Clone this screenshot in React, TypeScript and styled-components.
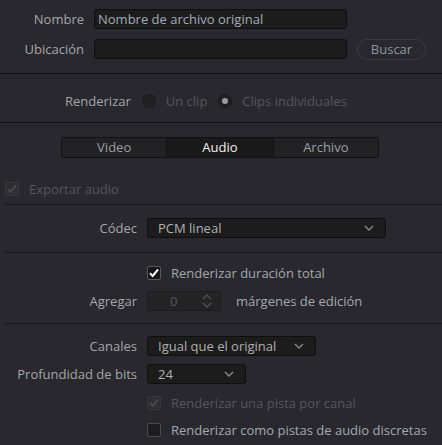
import React from "react";
import styled, { createGlobalStyle } from "styled-components";

const Global = createGlobalStyle`
  html, body { margin: 0; padding: 0; background: #28282e; }
  body { font-family: "Open Sans", "DejaVu Sans", sans-serif; font-size: 13px; color: #a6a6a8; }
  * { box-sizing: border-box; }
`;

const Page = styled.div`
  width: 442px;
  height: 445px;
  background: #28282e;
  overflow: hidden;
`;

const Divider = styled.div<{ $inset?: number }>`
  height: 1px;
  background: #141416;
  margin-left: ${(p) => p.$inset ?? 0}px;
`;

const Section = styled.div<{ $top: number; $bottom: number; $gap?: number }>`
  display: flex;
  flex-direction: column;
  gap: ${(p) => p.$gap ?? 0}px;
  padding-top: ${(p) => p.$top}px;
  padding-bottom: ${(p) => p.$bottom}px;
`;

const FormGrid = styled.div<{ $label: number; $rowGap: number }>`
  display: grid;
  grid-template-columns: ${(p) => p.$label}px 1fr;
  column-gap: 10px;
  row-gap: ${(p) => p.$rowGap}px;
  align-items: center;
`;

const Label = styled.div`
  text-align: right;
  color: #a6a6a8;
  white-space: nowrap;
  line-height: 20px;
`;

const FieldRow = styled.div`
  display: flex;
  align-items: center;
  gap: 10px;
  height: 20px;
`;

const TextInput = styled.div<{ $w: number }>`
  width: ${(p) => p.$w}px;
  height: 20px;
  background: #1c1c1d;
  border: 1px solid #0f0f10;
  border-radius: 3px;
  color: #a3abb4;
  padding-left: 3px;
  line-height: 18px;
  white-space: nowrap;
`;

const PillButton = styled.div`
  width: 69px;
  height: 21px;
  border: 1px solid #3c3c42;
  border-radius: 11px;
  color: #8d959e;
  text-align: center;
  line-height: 19px;
`;

const RenderRow = styled.div`
  display: flex;
  align-items: center;
  height: 20px;
  padding-left: 65px;
`;

const RadioCircle = styled.span<{ $on?: boolean }>`
  width: 14px;
  height: 14px;
  border-radius: 50%;
  background: #202023;
  border: 1px solid #1a1a1c;
  display: inline-flex;
  align-items: center;
  justify-content: center;
  margin: 0 10px 0 11px;
  &::after {
    content: "";
    display: ${(p) => (p.$on ? "block" : "none")};
    width: 6px;
    height: 6px;
    border-radius: 50%;
    background: #9a9a9e;
  }
`;

const DimText = styled.span`
  color: #56565d;
  white-space: nowrap;
`;

const Tabs = styled.div`
  display: flex;
  margin-left: 61px;
  width: 318px;
  height: 21px;
  border: 1px solid #111113;
  border-radius: 3px;
  overflow: hidden;
  background: #222225;
`;

const Tab = styled.div<{ $active?: boolean; $w: number }>`
  width: ${(p) => p.$w}px;
  text-align: center;
  line-height: 19px;
  color: ${(p) => (p.$active ? "#f2f2f2" : "#9c9ea2")};
  background: ${(p) => (p.$active ? "#19191a" : "transparent")};
  & + & {
    border-left: 1px solid #111113;
  }
`;

const CheckRow = styled.div<{ $indent: number; $mt?: number }>`
  display: flex;
  align-items: center;
  gap: 10px;
  height: 16px;
  padding-left: ${(p) => p.$indent}px;
  margin-top: ${(p) => p.$mt ?? 0}px;
`;

const Box = styled.span<{ $variant: "on" | "off" | "disabled" }>`
  width: 14px;
  height: 14px;
  border-radius: 2px;
  display: inline-flex;
  align-items: center;
  justify-content: center;
  flex: none;
  background: ${(p) => (p.$variant === "on" ? "#161617" : p.$variant === "off" ? "#1e1e20" : "#2d2d32")};
  border: 1px solid ${(p) => (p.$variant === "on" ? "#58585c" : p.$variant === "off" ? "#4a4a4f" : "#38383d")};
`;

const CheckText = styled.span<{ $dim?: boolean; $ml?: number }>`
  color: ${(p) => (p.$dim ? "#56565d" : "#a4a9af")};
  white-space: nowrap;
  margin-left: ${(p) => p.$ml ?? 0}px;
`;

const Select = styled.div<{ $w: number }>`
  width: ${(p) => p.$w}px;
  height: 20px;
  background: #1c1c1d;
  border: 1px solid #0f0f10;
  border-radius: 3px;
  display: flex;
  align-items: center;
  justify-content: space-between;
  padding: 0 11px 0 10px;
  color: #b0b0b2;
  white-space: nowrap;
`;

const Spin = styled.div`
  width: 74px;
  height: 20px;
  background: #242427;
  border: 1px solid #1c1c1e;
  border-radius: 3px;
  display: flex;
  align-items: center;
  justify-content: space-between;
  padding: 0 8px 0 22px;
  color: #55585c;
`;

const SpinArrows = styled.span`
  display: flex;
  flex-direction: column;
  gap: 2px;
`;

const Chevron = ({ up, color = "#8a8a8e" }: { up?: boolean; color?: string }) => (
  <svg width="10" height="6" viewBox="0 0 10 6">
    <path
      d={up ? "M1 5 L5 1 L9 5" : "M1 1 L5 5 L9 1"}
      fill="none"
      stroke={color}
      strokeWidth="1.4"
    />
  </svg>
);

const Tick = ({ color }: { color: string }) => (
  <svg width="12" height="12" viewBox="0 0 12 12">
    <path d="M2 6.3 L4.7 9 L10 2.5" fill="none" stroke={color} strokeWidth="2" />
  </svg>
);

export default function App() {
  return (
    <Page>
      <Global />
      <Section $top={9} $bottom={14}>
        <FormGrid $label={84} $rowGap={10}>
          <Label>Nombre</Label>
          <FieldRow>
            <TextInput $w={253}>Nombre de archivo original</TextInput>
          </FieldRow>
          <Label>Ubicación</Label>
          <FieldRow>
            <TextInput $w={253} />
            <PillButton>Buscar</PillButton>
          </FieldRow>
        </FormGrid>
      </Section>
      <Divider />
      <Section $top={17} $bottom={11}>
        <RenderRow>
          <Label>Renderizar</Label>
          <RadioCircle />
          <DimText>Un clip</DimText>
          <RadioCircle $on />
          <DimText>Clips individuales</DimText>
        </RenderRow>
      </Section>
      <Divider />
      <Section $top={14} $bottom={7} $gap={23}>
        <Tabs>
          <Tab $w={105}>Video</Tab>
          <Tab $w={107} $active>Audio</Tab>
          <Tab $w={106}>Archivo</Tab>
        </Tabs>
        <CheckRow $indent={5}>
          <Box $variant="disabled">
            <Tick color="#48484e" />
          </Box>
          <CheckText $dim>Exportar audio</CheckText>
        </CheckRow>
      </Section>
      <Divider $inset={5} />
      <Section $top={13} $bottom={14}>
        <FormGrid $label={137} $rowGap={0}>
          <Label>Códec</Label>
          <Select $w={239}>
            <span>PCM lineal</span>
            <Chevron />
          </Select>
        </FormGrid>
      </Section>
      <Divider $inset={5} />
      <Section $top={12} $bottom={12} $gap={10}>
        <CheckRow $indent={147}>
          <Box $variant="on">
            <Tick color="#ffffff" />
          </Box>
          <CheckText>Renderizar duración total</CheckText>
        </CheckRow>
        <FormGrid $label={137} $rowGap={0}>
          <Label>Agregar</Label>
          <FieldRow>
            <Spin>
              <span>0</span>
              <SpinArrows>
                <Chevron up color="#4e4e54" />
                <Chevron color="#4e4e54" />
              </SpinArrows>
            </Spin>
            <CheckText $ml={5}>márgenes de edición</CheckText>
          </FieldRow>
        </FormGrid>
      </Section>
      <Divider $inset={5} />
      <Section $top={12} $bottom={0}>
        <FormGrid $label={137} $rowGap={8}>
          <Label>Canales</Label>
          <Select $w={169}>
            <span>Igual que el original</span>
            <Chevron />
          </Select>
          <Label>Profundidad de bits</Label>
          <Select $w={99}>
            <span>24</span>
            <Chevron />
          </Select>
        </FormGrid>
        <CheckRow $indent={147} $mt={11}>
          <Box $variant="disabled">
            <Tick color="#48484e" />
          </Box>
          <CheckText $dim>Renderizar una pista por canal</CheckText>
        </CheckRow>
        <CheckRow $indent={147} $mt={11}>
          <Box $variant="off" />
          <CheckText>Renderizar como pistas de audio discretas</CheckText>
        </CheckRow>
      </Section>
    </Page>
  );
}
